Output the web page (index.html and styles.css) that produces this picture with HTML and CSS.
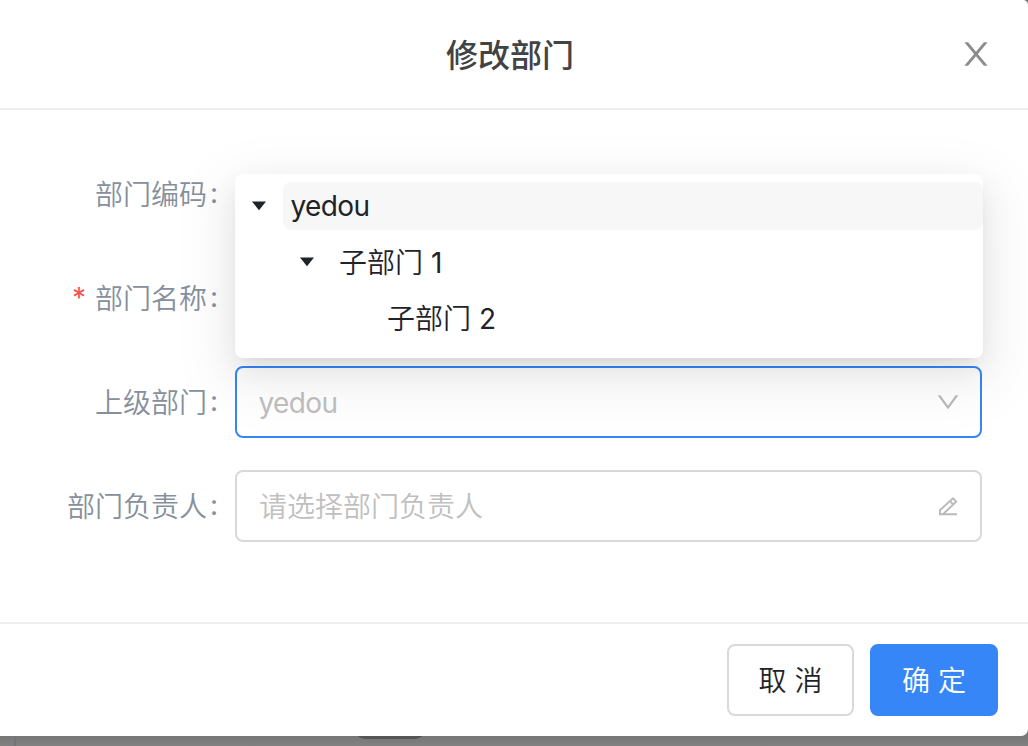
FILE: index.html
```html
<!DOCTYPE html>
<html lang="zh-CN">
<head>
<meta charset="utf-8">
<title>修改部门</title>
<link rel="stylesheet" href="styles.css">
</head>
<body>
<div class="page">
  <div class="page-rule"></div>
  <div class="page-pill"></div>
</div>
<section class="modal">
  <header class="modal-header">
    <h1 class="modal-title">修改部门</h1>
    <svg class="close" viewBox="64 64 896 896"><path d="M563.8 512l262.5-312.9c4.4-5.2.7-13.1-6.1-13.1h-79.8c-4.700 0-9.200 2.100-12.300 5.700L511.600 449.800 295.100 191.700c-3-3.600-7.500-5.700-12.300-5.700H203c-6.800 0-10.500 7.900-6.100 13.100L459.400 512 196.900 824.900A7.950 7.950 0 0 0 203 838h79.800c4.700 0 9.200-2.100 12.300-5.700l216.500-258.100 216.500 258.100c3 3.600 7.500 5.700 12.300 5.700h79.800c6.800 0 10.500-7.900 6.100-13.100L563.800 512z"/></svg>
  </header>
  <div class="modal-body">
    <div class="row"><label class="label">部门编码<span class="colon">:</span></label></div>
    <div class="row"><label class="label"><span class="star">*</span>部门名称<span class="colon">:</span></label></div>
    <div class="row">
      <label class="label">上级部门<span class="colon">:</span></label>
      <div class="field active">
        <span class="latin value">yedou</span>
        <svg class="down" viewBox="64 64 896 896"><path d="M884 256h-75c-5.1 0-9.9 2.5-12.9 6.6L512 654.2 227.9 262.6c-3-4.1-7.8-6.6-12.9-6.6h-75c-6.5 0-10.3 7.4-6.5 12.7l352.6 486.1c12.8 17.6 39 17.6 51.7 0l352.6-486.1c3.9-5.3.1-12.7-6.4-12.7z"/></svg>
        <div class="dropdown">
          <div class="node"><svg class="caret" viewBox="0 0 48 48"><path d="M17 19.500h14l-7 8.700z"/></svg><span class="node-title selected latin">yedou</span></div>
          <div class="node level1"><svg class="caret" viewBox="0 0 48 48"><path d="M17 19.500h14l-7 8.700z"/></svg><span class="node-title">子部门 <span class="digit">1</span></span></div>
          <div class="node level3"><span class="node-title">子部门 <span class="digit">2</span></span></div>
        </div>
      </div>
    </div>
    <div class="row">
      <label class="label">部门负责人<span class="colon">:</span></label>
      <div class="field">
        <span class="placeholder">请选择部门负责人</span>
        <svg class="edit" viewBox="0 0 24 24"><path d="M3 20.200H21M3.900 20V16.200L17 4.300L20.200 7.600L7.500 19.700M14 7.200L17.200 10.500"/></svg>
      </div>
    </div>
  </div>
  <footer class="modal-footer">
    <button class="btn">取 消</button>
    <button class="btn primary">确 定</button>
  </footer>
</section>
</body>
</html>
```
FILE: styles.css
```css
* { box-sizing: border-box; }
body {
  margin: 0;
  width: 1028px;
  height: 746px;
  overflow: hidden;
  background: #808080;
  font-family: Inter, "Noto Sans CJK SC", sans-serif;
  font-size: 28px;
  font-weight: 350;
  color: #1f2329;
}
.page { position: absolute; inset: 0; background: linear-gradient(#777 736px, #808080 746px); }
.page-rule { position: absolute; left: 14px; top: 0; width: 2px; height: 746px; background: #73737a; }
.page-pill { position: absolute; left: 353px; top: 710px; width: 74px; height: 29px; border-radius: 13px; background: #555; }
.modal {
  position: relative;
  height: 736px;
  background: #fff;
  border-radius: 0 5px 7px 0;
  display: flex;
  flex-direction: column;
}
.modal-header {
  height: 110px;
  border-bottom: 2px solid #eeeeef;
  display: grid;
  grid-template-columns: 68px 1fr 68px;
  align-items: center;
}
.modal-title {
  grid-column: 2;
  margin: 0;
  padding: 3px 8px 0 0;
  text-align: center;
  font-size: 32px;
  line-height: 48px;
  font-weight: 500;
  color: #434343;
}
.close { width: 32px; height: 32px; fill: #8c8c8c; }
.modal-body {
  flex: 1;
  padding: 48px 46px 0 0;
  display: flex;
  flex-direction: column;
  gap: 32px;
}
.row { display: flex; height: 72px; }
.label {
  width: 235px;
  padding: 0 16px 2px 0;
  display: flex;
  justify-content: flex-end;
  align-items: center;
  color: #86909c;
}
.colon { width: 9px; margin-left: 3px; padding-bottom: 1px; font-weight: 400; }
.star { margin-right: 9px; padding-top: 2px; color: #f25555; font-weight: 400; }
.field {
  position: relative;
  flex: 1;
  display: flex;
  align-items: center;
  justify-content: space-between;
  padding: 0 20px 0 22px;
  border: 2px solid #d9d9d9;
  border-radius: 8px;
  color: #bfbfbf;
}
.active { border-color: #3686f8; }
.latin { font-weight: 400; letter-spacing: -.6px; text-indent: -.5px; }
.value { padding-top: 2px; }
.placeholder { padding-bottom: 2px; }
.digit { font-weight: 400; }
.down { width: 24px; height: 24px; fill: #b9b9b9; }
.edit { width: 24px; height: 24px; fill: none; stroke: #b9b9b9; stroke-width: 1.9; }
.dropdown {
  position: absolute;
  left: -2px;
  bottom: 78px;
  width: 748px;
  height: 184px;
  padding: 8px 0;
  display: flex;
  flex-direction: column;
  gap: 8px;
  background: #fff;
  border-radius: 8px;
  color: #1f2329;
  box-shadow: 0 6px 12px -8px rgba(0,0,0,.12), 0 12px 32px 0 rgba(0,0,0,.08), 0 18px 56px 16px rgba(0,0,0,.05);
}
.node { height: 48px; display: flex; }
.level1 { padding-left: 48px; }
.level3 { padding-left: 96px; }
.level3 .node-title { margin-left: 48px; }
.caret { width: 48px; height: 48px; fill: #1f2329; }
.node-title { flex: 1; padding: 1px 8px 0; line-height: 48px; border-radius: 8px; }
.selected { height: 48px; padding-top: 0; line-height: 49px; background: #f7f7f7; }
.modal-footer {
  height: 114px;
  border-top: 2px solid #eeeeef;
  padding: 20px 30px 0;
  display: flex;
  justify-content: flex-end;
  gap: 16px;
}
.btn {
  width: 127px;
  height: 72px;
  border: 2px solid #d9d9d9;
  border-radius: 8px;
  background: #fff;
  padding: 0 0 2px;
  font: inherit;
  color: #1f2329;
}
.primary { width: 128px; border-color: #3686f8; background: #3686f8; color: #fff; }
```
